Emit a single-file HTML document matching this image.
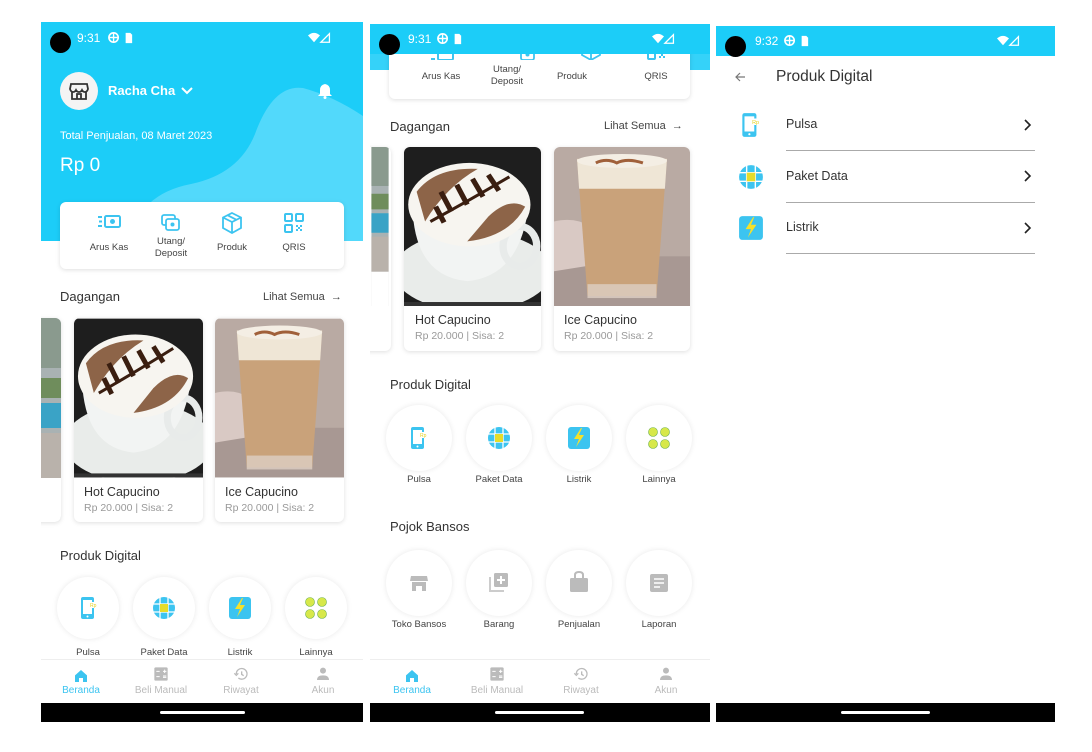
<!DOCTYPE html>
<html><head><meta charset="utf-8">
<style>
*{margin:0;padding:0;box-sizing:border-box}
body{width:1092px;height:752px;background:#fff;position:relative;overflow:hidden;font-family:"Liberation Sans",sans-serif;color:#333}
.a{position:absolute}
.scr{position:absolute;overflow:hidden;background:#fff}
.sb{position:absolute;left:0;top:0;width:100%;height:30px;background:#1ccdf8;color:#fff;font-size:12px}
.dot{position:absolute;left:9px;top:10px;width:21px;height:21px;border-radius:50%;background:#000}
.t{position:absolute;white-space:nowrap}
.card{position:absolute;background:#fff;border-radius:6px;box-shadow:0 1px 5px rgba(0,0,0,.13);overflow:hidden}
.circ{position:absolute;border-radius:50%;background:#fff;box-shadow:0 0 6px rgba(0,0,0,.09)}
.lbl{position:absolute;font-size:9.5px;color:#444;text-align:center;width:80px;margin-left:-40px}
.nav{position:absolute;left:0;width:100%;height:43px;background:#fff;border-top:1px solid #eee}
.nl{position:absolute;font-size:10px;color:#bbb;text-align:center;width:80px;margin-left:-40px;top:25px}
.blk{position:absolute;left:0;width:100%;height:19px;background:#000}
.blk i{position:absolute;top:8px;height:3px;width:85px;background:#fff;border-radius:2px}
</style></head><body>

<svg width="0" height="0" style="position:absolute">
<defs>
<symbol id="hot" viewBox="0 0 130 160">
<rect width="130" height="160" fill="#1e1e1e"/>
<ellipse cx="65" cy="125" rx="75" ry="40" fill="#e9ecea"/>
<path d="M8 60 Q10 130 60 135 Q110 130 118 60Z" fill="#f2f4f3"/>
<ellipse cx="110" cy="100" rx="16" ry="20" fill="none" stroke="#e8ebea" stroke-width="7"/>
<ellipse cx="62" cy="58" rx="58" ry="42" fill="#f7f5f0"/>
<path d="M12 45 Q30 20 70 22 Q40 40 20 75Z" fill="#7a4a2a" opacity=".85"/>
<path d="M60 95 Q100 90 115 60 Q100 50 80 70Z" fill="#7a4a2a" opacity=".85"/>
<path d="M25 75 Q60 55 100 30" stroke="#3a1e10" stroke-width="3" fill="none"/>
<path d="M35 45 l10 20 M50 38 l10 20 M65 32 l10 18 M80 28 l10 16 M30 60 l8 16" stroke="#3a1e10" stroke-width="5" fill="none"/>
<rect y="156" width="130" height="4" fill="#333"/>
</symbol>
<symbol id="ice" viewBox="0 0 130 160">
<rect width="130" height="160" fill="#b9aaa3"/>
<rect y="110" width="130" height="50" fill="#a89893"/>
<path d="M0 75 Q20 70 35 80 L30 120 L0 125Z" fill="#d9c9c4"/>
<path d="M22 12 L108 12 L98 150 L32 150Z" fill="#c9a27a"/>
<path d="M22 12 L108 12 L106 42 L24 42Z" fill="#efe6d6"/>
<ellipse cx="65" cy="14" rx="43" ry="7" fill="#f4eee4"/>
<path d="M40 16 q10 -5 20 0 q10 -5 25 0" stroke="#a0603a" stroke-width="3" fill="none"/>
<rect x="32" y="138" width="66" height="14" fill="#ddd0c4" opacity=".8"/>
</symbol>
<symbol id="city" viewBox="0 0 22 204">
<rect width="22" height="204" fill="#a9b2b3"/>
<rect y="0" width="22" height="50" fill="#8a9a8e"/>
<rect y="60" width="22" height="20" fill="#6f8d5c"/>
<rect y="85" width="22" height="25" fill="#3aa3c6"/>
<rect y="115" width="22" height="45" fill="#b9b2ab"/>
<rect y="160" width="22" height="44" fill="#fff"/>
</symbol>
<symbol id="pulsa" viewBox="0 0 24 24"><rect x="4" y="1" width="13" height="22" rx="2" fill="#3cc4f0"/><rect x="6" y="4" width="9" height="14" fill="#fff"/><circle cx="10.5" cy="20.5" r="1" fill="#fff"/><rect x="12" y="6" width="9" height="6" fill="#fff"/><text x="13" y="11" font-size="5" fill="#e6d21f" font-family="Liberation Sans">Rp</text></symbol>
<symbol id="globe" viewBox="0 0 24 24"><circle cx="12" cy="12" r="11" fill="#3cc4f0"/><path d="M1 8H23M1 16H23M8 1V23M16 1V23" stroke="#fff" stroke-width="1.3"/><rect x="8" y="8" width="8" height="8" fill="#e6dc2a"/></symbol>
<symbol id="bolt" viewBox="0 0 24 24"><rect x="1" y="1" width="22" height="22" rx="3" fill="#3cc4f0"/><path d="M14 2 L7 13 H12 L9 21 L17 9 H12 L15 2Z" fill="#f5e12a"/></symbol>
<symbol id="more" viewBox="0 0 24 24"><g fill="#d7e84a" stroke="#6cb04a" stroke-width=".6"><circle cx="6" cy="6" r="4.5"/><circle cx="18" cy="6" r="4.5"/><circle cx="6" cy="18" r="4.5"/><circle cx="18" cy="18" r="4.5"/></g></symbol>
<symbol id="home" viewBox="0 0 24 24"><path d="M3 11 L12 3 L21 11 V21 H15 V15 H9 V21 H3Z" fill="#3cc4f0"/></symbol>
<symbol id="calc" viewBox="0 0 24 24"><rect x="2" y="2" width="20" height="20" rx="2" fill="#bbb"/><path d="M5 8h5M15 8h5M17.5 5.5v5M5 16h5M15 15h5M15 17h5" stroke="#fff" stroke-width="1.5"/></symbol>
<symbol id="hist" viewBox="0 0 24 24"><path d="M5 12 A8 8 0 1 1 8 18" fill="none" stroke="#bbb" stroke-width="2"/><path d="M2 11 L5 14 L8 11" fill="none" stroke="#bbb" stroke-width="2"/><path d="M13 8 V12.5 L16 14.5" fill="none" stroke="#bbb" stroke-width="2"/></symbol>
<symbol id="user" viewBox="0 0 24 24"><circle cx="12" cy="7" r="4.5" fill="#bbb"/><path d="M3 21 Q3 14 12 14 Q21 14 21 21Z" fill="#bbb"/></symbol>
<symbol id="sbicons" viewBox="0 0 30 14"><circle cx="7" cy="7" r="5" fill="none" stroke="#fff" stroke-width="1.8"/><path d="M2 7h10M7 2v10" stroke="#fff" stroke-width="1.5"/><path d="M20 2h5l2 2v9h-7Z" fill="#fff"/></symbol>
<symbol id="wifi" viewBox="0 0 30 14"><path d="M1 4 Q8 -2 15 4 L8 12Z" fill="#fff"/><path d="M26 2 V12 H16Z" fill="none" stroke="#fff" stroke-width="1.5"/></symbol>
</defs>
</svg>

<!-- ================= SCREEN 1 ================= -->
<div class="scr" style="left:41px;top:22px;width:322px;height:700px">
  <div class="a" style="left:0;top:0;width:322px;height:219px;background:#1ccdf8;overflow:hidden">
    <svg class="a" style="left:0;top:0" width="322" height="219"><path d="M88 219 Q98 172 150 162 Q198 152 214 112 Q232 62 262 66 Q292 74 322 94 V219Z" fill="#52d9fb"/></svg>
  </div>
  <div class="sb" style="background:#1ccdf8"><div class="dot"></div><span class="t" style="left:36px;top:9px">9:31</span>
    <svg class="a" style="left:66px;top:9px" width="28" height="13"><use href="#sbicons"/></svg>
    <svg class="a" style="left:266px;top:10px" width="26" height="12"><use href="#wifi"/></svg></div>
  <div class="a" style="left:19px;top:50px;width:38px;height:38px;border-radius:50%;background:#f4f4f4">
    <svg class="a" style="left:9px;top:9px" width="20" height="20" viewBox="0 0 20 20"><path d="M2 3h16l1 5q-1 3-3 3t-3-2q-1 2-3 2t-3-2q-1 2-3 2t-3-3Z M3 11v7h14v-7 M8 18v-5h4v5" fill="none" stroke="#333" stroke-width="1.8"/></svg>
  </div>
  <span class="t" style="left:67px;top:61px;color:#fff;font-weight:bold;font-size:13px">Racha Cha</span>
  <svg class="a" style="left:140px;top:64px" width="12" height="10"><path d="M1 2l5 5 5-5" stroke="#fff" stroke-width="2" fill="none"/></svg>
  <svg class="a" style="left:277px;top:61px" width="14" height="16" viewBox="0 0 14 16"><path d="M7 1 Q2 2 2 7 V11 L0 13 H14 L12 11 V7 Q12 2 7 1Z" fill="#fff"/><circle cx="7" cy="14.5" r="1.5" fill="#fff"/></svg>
  <span class="t" style="left:19px;top:108px;color:#fff;font-size:11px">Total Penjualan, 08 Maret 2023</span>
  <span class="t" style="left:19px;top:133px;color:#fff;font-size:19px">Rp 0</span>
  <div class="card" style="left:19px;top:180px;width:284px;height:67px">
    <svg class="a" style="left:37px;top:12px" width="24" height="16" viewBox="0 0 24 16"><rect x="8" y="2" width="15" height="11" rx="1.5" fill="none" stroke="#3cc4f0" stroke-width="2"/><circle cx="15.5" cy="7.5" r="2.5" fill="#3cc4f0"/><path d="M1 3h4M2 7.5h3M1 12h4" stroke="#3cc4f0" stroke-width="2"/></svg>
    <span class="lbl" style="left:49px;top:40px">Arus Kas</span>
    <svg class="a" style="left:101px;top:12px" width="20" height="18" viewBox="0 0 20 18"><rect x="1" y="1" width="13" height="10" rx="2" fill="none" stroke="#3cc4f0" stroke-width="1.8"/><rect x="5" y="5" width="13" height="11" rx="2" fill="#fff" stroke="#3cc4f0" stroke-width="1.8"/><circle cx="11.5" cy="10.5" r="2" fill="#3cc4f0"/></svg>
    <span class="lbl" style="left:111px;top:34px;line-height:12px">Utang/<br>Deposit</span>
    <svg class="a" style="left:162px;top:10px" width="20" height="22" viewBox="0 0 20 22"><path d="M10 1 L19 5.5 V16 L10 21 L1 16 V5.5Z M1 5.5 L10 10 L19 5.5 M10 10 V21 M5.5 3.2 L14.5 7.8" fill="none" stroke="#3cc4f0" stroke-width="1.8"/></svg>
    <span class="lbl" style="left:172px;top:40px">Produk</span>
    <svg class="a" style="left:224px;top:11px" width="20" height="20" viewBox="0 0 20 20"><g fill="none" stroke="#3cc4f0" stroke-width="2"><rect x="1" y="1" width="7" height="7" rx="1"/><rect x="12" y="1" width="7" height="7" rx="1"/><rect x="1" y="12" width="7" height="7" rx="1"/></g><g fill="#3cc4f0"><rect x="12" y="12" width="2" height="2"/><rect x="16" y="12" width="2" height="2"/><rect x="14" y="14" width="2" height="2"/><rect x="12" y="16" width="2" height="2"/><rect x="16" y="16" width="2" height="2"/></g></svg>
    <span class="lbl" style="left:234px;top:40px">QRIS</span>
  </div>
  <span class="t" style="left:19px;top:267px;font-size:13px;color:#333">Dagangan</span>
  <span class="t" style="left:222px;top:269px;font-size:11px;color:#444">Lihat Semua &nbsp;→</span>
  <div class="card" style="left:-10px;top:296px;width:30px;height:204px"><svg class="a" style="left:8px;top:0" width="22" height="204"><use href="#city"/></svg></div>
  <div class="card" style="left:33px;top:296px;width:129px;height:204px">
    <svg width="129" height="160"><use href="#hot"/></svg>
    <span class="t" style="left:10px;top:167px;font-size:12.5px;color:#333">Hot Capucino</span>
    <span class="t" style="left:10px;top:184px;font-size:10.5px;color:#999">Rp 20.000 | Sisa: 2</span>
  </div>
  <div class="card" style="left:174px;top:296px;width:129px;height:204px">
    <svg width="129" height="160"><use href="#ice"/></svg>
    <span class="t" style="left:10px;top:167px;font-size:12.5px;color:#333">Ice Capucino</span>
    <span class="t" style="left:10px;top:184px;font-size:10.5px;color:#999">Rp 20.000 | Sisa: 2</span>
  </div>
  <span class="t" style="left:19px;top:526px;font-size:13px;color:#333">Produk Digital</span>
  <div class="circ" style="left:16px;top:555px;width:62px;height:62px"><svg class="a" style="left:20px;top:19px" width="24" height="24"><use href="#pulsa"/></svg></div>
  <div class="circ" style="left:92px;top:555px;width:62px;height:62px"><svg class="a" style="left:19px;top:19px" width="24" height="24"><use href="#globe"/></svg></div>
  <div class="circ" style="left:168px;top:555px;width:62px;height:62px"><svg class="a" style="left:19px;top:19px" width="24" height="24"><use href="#bolt"/></svg></div>
  <div class="circ" style="left:244px;top:555px;width:62px;height:62px"><svg class="a" style="left:19px;top:19px" width="24" height="24"><use href="#more"/></svg></div>
  <span class="lbl" style="left:47px;top:625px">Pulsa</span>
  <span class="lbl" style="left:123px;top:625px">Paket Data</span>
  <span class="lbl" style="left:199px;top:625px">Listrik</span>
  <span class="lbl" style="left:275px;top:625px">Lainnya</span>
  <div class="nav" style="top:637px">
    <svg class="a" style="left:32px;top:8px" width="16" height="16"><use href="#home"/></svg><span class="nl" style="left:40px;color:#3cc4f0">Beranda</span>
    <svg class="a" style="left:112px;top:6px" width="16" height="16"><use href="#calc"/></svg><span class="nl" style="left:120px">Beli Manual</span>
    <svg class="a" style="left:192px;top:6px" width="16" height="16"><use href="#hist"/></svg><span class="nl" style="left:200px">Riwayat</span>
    <svg class="a" style="left:274px;top:6px" width="16" height="16"><use href="#user"/></svg><span class="nl" style="left:282px">Akun</span>
  </div>
  <div class="blk" style="top:681px"><i style="left:119px"></i></div>
</div>

<!-- ================= SCREEN 2 ================= -->
<div class="scr" style="left:370px;top:24px;width:340px;height:698px">
  <div class="a" style="left:0;top:30px;width:340px;height:16px;background:#35d2f9"></div>
  <div class="card" style="left:19px;top:22px;width:301px;height:53px">
    <svg class="a" style="left:41px;top:6px" width="24" height="8" viewBox="0 5 24 8"><rect x="8" y="2" width="15" height="11" rx="1.5" fill="none" stroke="#3cc4f0" stroke-width="2"/><path d="M1 12h4" stroke="#3cc4f0" stroke-width="2"/></svg>
    <span class="lbl" style="left:52px;top:25px">Arus Kas</span>
    <svg class="a" style="left:127px;top:6px" width="20" height="8" viewBox="0 8 20 8"><rect x="5" y="5" width="13" height="11" rx="2" fill="#fff" stroke="#3cc4f0" stroke-width="1.8"/><circle cx="11.5" cy="10.5" r="2" fill="#3cc4f0"/></svg>
    <span class="lbl" style="left:118px;top:18px;line-height:12px">Utang/<br>Deposit</span>
    <svg class="a" style="left:192px;top:6px" width="20" height="8" viewBox="0 13 20 8"><path d="M10 1 L19 5.5 V16 L10 21 L1 16 V5.5Z M10 10 V21" fill="none" stroke="#3cc4f0" stroke-width="1.8"/></svg>
    <span class="lbl" style="left:183px;top:25px">Produk</span>
    <svg class="a" style="left:258px;top:6px" width="20" height="8" viewBox="0 12 20 8"><rect x="1" y="12" width="7" height="7" rx="1" fill="none" stroke="#3cc4f0" stroke-width="2"/><g fill="#3cc4f0"><rect x="12" y="12" width="2" height="2"/><rect x="16" y="12" width="2" height="2"/><rect x="14" y="14" width="2" height="2"/><rect x="12" y="16" width="2" height="2"/><rect x="16" y="16" width="2" height="2"/></g></svg>
    <span class="lbl" style="left:267px;top:25px">QRIS</span>
  </div>
  <div class="sb"><div class="dot"></div><span class="t" style="left:38px;top:8px">9:31</span>
    <svg class="a" style="left:66px;top:8px" width="28" height="13"><use href="#sbicons"/></svg>
    <svg class="a" style="left:281px;top:9px" width="26" height="12"><use href="#wifi"/></svg></div>
  <span class="t" style="left:20px;top:95px;font-size:13px;color:#333">Dagangan</span>
  <span class="t" style="left:234px;top:96px;font-size:11px;color:#444">Lihat Semua &nbsp;→</span>
  <div class="card" style="left:-10px;top:123px;width:31px;height:204px"><svg class="a" style="left:9px;top:0" width="22" height="159" viewBox="0 0 22 159" preserveAspectRatio="none"><use href="#city"/></svg></div>
  <div class="card" style="left:34px;top:123px;width:137px;height:204px">
    <svg width="137" height="159" viewBox="0 0 130 160" preserveAspectRatio="none"><use href="#hot"/></svg>
    <span class="t" style="left:11px;top:166px;font-size:12.5px;color:#333">Hot Capucino</span>
    <span class="t" style="left:11px;top:183px;font-size:10.5px;color:#999">Rp 20.000 | Sisa: 2</span>
  </div>
  <div class="card" style="left:184px;top:123px;width:136px;height:204px">
    <svg width="136" height="159" viewBox="0 0 130 160" preserveAspectRatio="none"><use href="#ice"/></svg>
    <span class="t" style="left:10px;top:166px;font-size:12.5px;color:#333">Ice Capucino</span>
    <span class="t" style="left:10px;top:183px;font-size:10.5px;color:#999">Rp 20.000 | Sisa: 2</span>
  </div>
  <span class="t" style="left:20px;top:353px;font-size:13px;color:#333">Produk Digital</span>
  <div class="circ" style="left:16px;top:381px;width:66px;height:66px"><svg class="a" style="left:21px;top:21px" width="24" height="24"><use href="#pulsa"/></svg></div>
  <div class="circ" style="left:96px;top:381px;width:66px;height:66px"><svg class="a" style="left:21px;top:21px" width="24" height="24"><use href="#globe"/></svg></div>
  <div class="circ" style="left:176px;top:381px;width:66px;height:66px"><svg class="a" style="left:21px;top:21px" width="24" height="24"><use href="#bolt"/></svg></div>
  <div class="circ" style="left:256px;top:381px;width:66px;height:66px"><svg class="a" style="left:21px;top:21px" width="24" height="24"><use href="#more"/></svg></div>
  <span class="lbl" style="left:49px;top:450px">Pulsa</span>
  <span class="lbl" style="left:129px;top:450px">Paket Data</span>
  <span class="lbl" style="left:209px;top:450px">Listrik</span>
  <span class="lbl" style="left:289px;top:450px">Lainnya</span>
  <span class="t" style="left:20px;top:495px;font-size:13px;color:#333">Pojok Bansos</span>
  <div class="circ" style="left:16px;top:526px;width:66px;height:66px"><svg class="a" style="left:23px;top:23px" width="20" height="20" viewBox="0 0 20 20"><path d="M2 3h16l1 5H1Z M3 9h14v9h-4v-5H7v5H3Z" fill="#bbb"/></svg></div>
  <div class="circ" style="left:96px;top:526px;width:66px;height:66px"><svg class="a" style="left:22px;top:21px" width="22" height="22" viewBox="0 0 22 22"><path d="M2 6v14h14" fill="none" stroke="#ccc" stroke-width="2"/><rect x="6" y="2" width="14" height="14" rx="1.5" fill="#bbb"/><path d="M13 5v8M9 9h8" stroke="#fff" stroke-width="2"/></svg></div>
  <div class="circ" style="left:176px;top:526px;width:66px;height:66px"><svg class="a" style="left:23px;top:21px" width="20" height="22" viewBox="0 0 20 22"><path d="M6 7V4Q6 1 10 1Q14 1 14 4V7" fill="none" stroke="#bbb" stroke-width="2"/><rect x="1" y="7" width="18" height="14" rx="1.5" fill="#bbb"/></svg></div>
  <div class="circ" style="left:256px;top:526px;width:66px;height:66px"><svg class="a" style="left:23px;top:23px" width="20" height="20" viewBox="0 0 20 20"><rect x="1" y="1" width="18" height="18" rx="2" fill="#bbb"/><path d="M5 6h10M5 10h10M5 14h6" stroke="#fff" stroke-width="1.6"/></svg></div>
  <span class="lbl" style="left:49px;top:595px">Toko Bansos</span>
  <span class="lbl" style="left:129px;top:595px">Barang</span>
  <span class="lbl" style="left:209px;top:595px">Penjualan</span>
  <span class="lbl" style="left:289px;top:595px">Laporan</span>
  <div class="nav" style="top:635px">
    <svg class="a" style="left:34px;top:8px" width="16" height="16"><use href="#home"/></svg><span class="nl" style="left:42px;color:#3cc4f0">Beranda</span>
    <svg class="a" style="left:119px;top:6px" width="16" height="16"><use href="#calc"/></svg><span class="nl" style="left:127px">Beli Manual</span>
    <svg class="a" style="left:203px;top:6px" width="16" height="16"><use href="#hist"/></svg><span class="nl" style="left:211px">Riwayat</span>
    <svg class="a" style="left:288px;top:6px" width="16" height="16"><use href="#user"/></svg><span class="nl" style="left:296px">Akun</span>
  </div>
  <div class="blk" style="top:679px"><i style="left:125px;width:89px"></i></div>
</div>

<!-- ================= SCREEN 3 ================= -->
<div class="scr" style="left:716px;top:26px;width:339px;height:696px">
  <div class="sb"><div class="dot"></div><span class="t" style="left:39px;top:8px">9:32</span>
    <svg class="a" style="left:67px;top:8px" width="28" height="13"><use href="#sbicons"/></svg>
    <svg class="a" style="left:280px;top:9px" width="26" height="12"><use href="#wifi"/></svg></div>
  <svg class="a" style="left:18px;top:46px" width="12" height="10"><path d="M11 5H2M6 1L2 5 6 9" stroke="#777" stroke-width="1.2" fill="none"/></svg>
  <span class="t" style="left:60px;top:42px;font-size:15.5px;color:#333">Produk Digital</span>
  <svg class="a" style="left:22px;top:86px" width="26" height="26" viewBox="0 0 24 24"><use href="#pulsa"/></svg>
  <svg class="a" style="left:22px;top:138px" width="26" height="26"><use href="#globe"/></svg>
  <svg class="a" style="left:22px;top:189px" width="26" height="26"><use href="#bolt"/></svg>
  <span class="t" style="left:70px;top:91px;font-size:12.5px;color:#333">Pulsa</span>
  <span class="t" style="left:70px;top:143px;font-size:12.5px;color:#333">Paket Data</span>
  <span class="t" style="left:70px;top:194px;font-size:12.5px;color:#333">Listrik</span>
  <svg class="a" style="left:308px;top:93px" width="8" height="12"><path d="M1 1l5 5-5 5" stroke="#222" stroke-width="1.6" fill="none"/></svg>
  <svg class="a" style="left:308px;top:144px" width="8" height="12"><path d="M1 1l5 5-5 5" stroke="#222" stroke-width="1.6" fill="none"/></svg>
  <svg class="a" style="left:308px;top:196px" width="8" height="12"><path d="M1 1l5 5-5 5" stroke="#222" stroke-width="1.6" fill="none"/></svg>
  <div class="a" style="left:70px;top:124px;width:249px;height:1px;background:#aaa"></div>
  <div class="a" style="left:70px;top:176px;width:249px;height:1px;background:#aaa"></div>
  <div class="a" style="left:70px;top:227px;width:249px;height:1px;background:#aaa"></div>
  <div class="blk" style="top:677px"><i style="left:125px;width:89px"></i></div>
</div>
</body></html>
